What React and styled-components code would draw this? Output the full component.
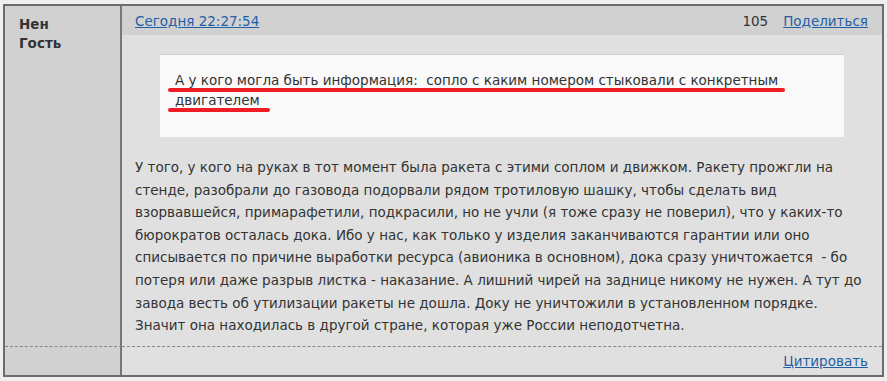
import React from 'react';
import styled, { createGlobalStyle } from 'styled-components';

const GlobalStyle = createGlobalStyle`
  html, body {
    margin: 0;
    padding: 0;
    background: #efefef;
  }
  body {
    font-family: "DejaVu Sans", Verdana, sans-serif;
    font-size: 13.5px;
    color: #333;
  }
`;

const Post = styled.div`
  margin: 4px 0 0 3px;
  width: 877px;
  border: 2px solid #6c6c6c;
  display: grid;
  grid-template-columns: 117px 1fr;
  grid-template-rows: 340px 29px;
  background: #dfe0df;
`;

const AuthorCell = styled.div`
  background: #d1d1d1;
  border-right: 2px solid #777;
  padding: 9px 0 0 14px;
  font-weight: bold;
  line-height: 19px;
  color: #333;
`;

const FooterLeft = styled.div`
  background: #d1d1d1;
  border-right: 2px solid #777;
  border-top: 1px dashed #888;
`;

const MainCell = styled.div`
  display: flex;
  flex-direction: column;
`;

const Header = styled.div`
  height: 29px;
  background: #d1d1d1;
  display: flex;
  align-items: center;
  padding: 0 14px 0 13px;
`;

const Spacer = styled.div`
  flex: 1;
`;

const Link = styled.a`
  color: #1f5fa6;
  text-decoration: underline;
  cursor: pointer;
`;

const Count = styled.span`
  color: #333;
  margin-right: 15px;
`;

const Body = styled.div`
  padding: 19px 18px 0 13px;
`;

const Quote = styled.div`
  position: relative;
  margin: 0 20px 0 25px;
  background: #f9f9f9;
  border-top: 1px solid #cfcfcf;
  padding: 15px 15px 27px 15px;
  line-height: 20px;
`;

const Mark = styled.div`
  position: absolute;
  left: 8px;
  height: 4px;
  border-radius: 2px;
  background: #ee1c25;
`;

const Text = styled.p`
  margin: 19px 0 0;
  line-height: 22.6px;
  color: #333;
`;

const Footer = styled.div`
  border-top: 1px dashed #888;
  display: flex;
  align-items: center;
  justify-content: flex-end;
  padding-right: 14px;
`;

export default function App() {
  return (
    <>
      <GlobalStyle />
      <Post>
        <AuthorCell>
          Нен
          <br />
          Гость
        </AuthorCell>
        <MainCell>
          <Header>
            <Link>Сегодня 22:27:54</Link>
            <Spacer />
            <Count>105</Count>
            <Link>Поделиться</Link>
          </Header>
          <Body>
            <Quote>
              А у кого могла быть информация:&nbsp; сопло с каким номером стыковали с конкретным двигателем
              <Mark style={{ top: 33, width: 617 }} />
              <Mark style={{ top: 53, width: 102 }} />
            </Quote>
            <Text>
              У того, у кого на руках в тот момент была ракета с этими соплом и движком. Ракету прожгли на
              стенде, разобрали до газовода подорвали рядом тротиловую шашку, чтобы сделать вид
              взорвавшейся, примарафетили, подкрасили, но не учли (я тоже сразу не поверил), что у каких-то
              бюрократов осталась дока. Ибо у нас, как только у изделия заканчиваются гарантии или оно
              списывается по причине выработки ресурса (авионика в основном), дока сразу уничтожается&nbsp; - бо
              потеря или даже разрыв листка - наказание. А лишний чирей на заднице никому не нужен. А тут до
              завода весть об утилизации ракеты не дошла. Доку не уничтожили в установленном порядке.
              Значит она находилась в другой стране, которая уже России неподотчетна.
            </Text>
          </Body>
        </MainCell>
        <FooterLeft />
        <Footer>
          <Link>Цитировать</Link>
        </Footer>
      </Post>
    </>
  );
}
